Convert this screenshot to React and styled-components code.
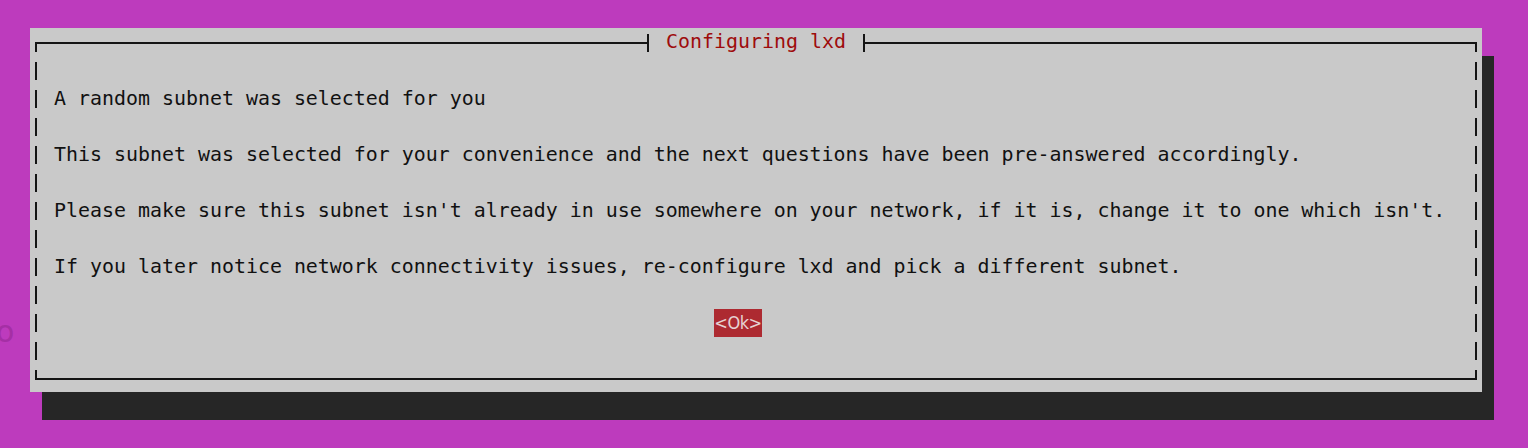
import React from "react";
import styled, { createGlobalStyle } from "styled-components";

const Global = createGlobalStyle`
  html, body { margin: 0; padding: 0; background: #bd3bbd; }
  #root { width: 1528px; height: 448px; }
`;

const INK = "#141414";

const Screen = styled.div`
  position: relative;
  width: 1528px;
  height: 448px;
  overflow: hidden;
  background: #bd3bbd;
  padding: 28px 0 0 30px;
  box-sizing: border-box;
  font-family: "DejaVu Sans Mono", "Liberation Mono", monospace;
`;

const GhostGlyph = styled.span`
  position: absolute;
  left: -4px;
  top: 312px;
  font-family: "DejaVu Sans", "Noto Sans", sans-serif;
  font-size: 30px;
  line-height: 40px;
  color: #a52fa5;
`;

const Dialog = styled.div`
  width: 1452px;
  height: 364px;
  background: #c9c9c9;
  box-shadow: 12px 28px 0 #262626;
  display: flex;
  flex-direction: column;
`;

const FrameRow = styled.div`
  display: flex;
  align-items: flex-start;
  height: 28px;
`;

const HLine = styled.div`
  flex: 1;
  height: 2px;
  margin-top: 14px;
  background: ${INK};
`;

const Title = styled.span`
  padding: 0 12px;
  line-height: 28px;
  font-size: 19.93px;
  color: #9e0c0c;
  white-space: pre;
`;

const BodyRow = styled.div`
  display: flex;
  height: 28px;
`;

const Content = styled.div`
  flex: 1;
  padding-left: ${(p) => p.$indent || 12}px;
  font-size: 19.93px;
  line-height: 28px;
  padding-top: 1px;
  box-sizing: border-box;
  color: #111;
  white-space: pre;
`;

const OkButton = styled.span`
  display: inline-block;
  width: 48px;
  height: 28px;
  margin-top: -1px;
  background: #ad2a31;
  color: #e6d2d2;
  text-align: center;
  font-family: "DejaVu Sans Condensed", "DejaVu Sans", sans-serif;
  font-size: 18px;
  line-height: 28px;
  letter-spacing: -0.5px;
`;

const GlyphSvg = styled.svg`
  display: block;
  flex: none;
  width: 12px;
  height: 28px;
`;

const PARTS = {
  v: [[5, 6, 2, 18]],
  tl: [[5, 14, 7, 2], [5, 14, 2, 10]],
  tr: [[0, 14, 7, 2], [5, 14, 2, 10]],
  bl: [[5, 6, 2, 10], [5, 14, 7, 2]],
  br: [[5, 6, 2, 10], [0, 14, 7, 2]],
  rtee: [[5, 6, 2, 18], [0, 14, 7, 2]],
  ltee: [[5, 6, 2, 18], [5, 14, 7, 2]],
};

function Box({ kind }) {
  return (
    <GlyphSvg viewBox="0 0 12 28">
      {PARTS[kind].map(([x, y, w, h], i) => (
        <rect key={i} x={x} y={y} width={w} height={h} fill={INK} />
      ))}
    </GlyphSvg>
  );
}

const LINES = [
  null,
  "A random subnet was selected for you",
  null,
  "This subnet was selected for your convenience and the next questions have been pre-answered accordingly.",
  null,
  "Please make sure this subnet isn't already in use somewhere on your network, if it is, change it to one which isn't.",
  null,
  "If you later notice network connectivity issues, re-configure lxd and pick a different subnet.",
  null,
  "__button__",
  null,
];

export default function App() {
  return (
    <>
      <Global />
      <Screen>
        <GhostGlyph>o</GhostGlyph>
        <Dialog>
          <FrameRow>
            <Box kind="tl" />
            <HLine />
            <Box kind="rtee" />
            <Title>Configuring lxd</Title>
            <Box kind="ltee" />
            <HLine />
            <Box kind="tr" />
          </FrameRow>
          {LINES.map((line, i) => (
            <BodyRow key={i}>
              <Box kind="v" />
              {line === "__button__" ? (
                <Content $indent={672}>
                  <OkButton>&lt;Ok&gt;</OkButton>
                </Content>
              ) : (
                <Content>{line || ""}</Content>
              )}
              <Box kind="v" />
            </BodyRow>
          ))}
          <FrameRow>
            <Box kind="bl" />
            <HLine />
            <Box kind="br" />
          </FrameRow>
        </Dialog>
      </Screen>
    </>
  );
}
